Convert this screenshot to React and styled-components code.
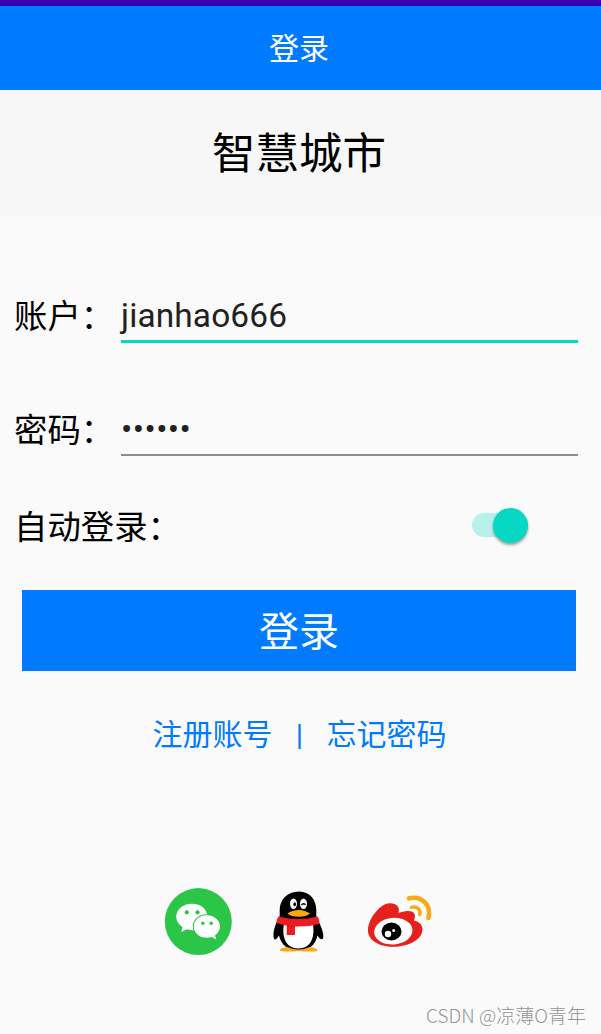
import React from 'react'
import styled, { createGlobalStyle } from 'styled-components'

const GlobalStyle = createGlobalStyle`
  body {
    margin: 0;
    background: #fafafa;
  }
  * {
    box-sizing: border-box;
  }
`

const Screen = styled.div`
  display: flex;
  flex-direction: column;
  height: 1034px;
  overflow: hidden;
  background: #fafafa;
  color: #000;
  font-family: Roboto, 'Noto Sans CJK SC', sans-serif;
`

const StatusBar = styled.div`
  height: 6px;
  background: #3700b3;
`

const TitleBar = styled.header`
  display: flex;
  align-items: center;
  justify-content: center;
  height: 84px;
  padding: 2px 3px 0 0;
  background: #007bff;
  color: #fff;
  font-size: 30px;
  line-height: 44px;
`

const Banner = styled.h1`
  display: flex;
  align-items: center;
  justify-content: center;
  height: 126px;
  margin: 0;
  padding: 4px 3px 0 0;
  background: #f7f7f7;
  font-size: 43.5px;
  font-weight: 400;
  line-height: 64px;
`

const Form = styled.div`
  display: flex;
  flex-direction: column;
  padding: 76px 23px 0 14px;
`

const Field = styled.div`
  display: flex;
  height: 51px;
  margin-bottom: 62px;
`

const Label = styled.span`
  flex: none;
  width: 107px;
  padding-top: ${p => p.$top || 0}px;
  font-size: 33.4px;
  line-height: 50px;
  white-space: nowrap;
`

const Value = styled.div`
  flex: 1;
  height: ${p => (p.$active ? 51 : 50)}px;
  margin-top: ${p => (p.$active ? 0 : 1)}px;
  border-bottom: ${p => (p.$active ? '3px solid #03dac5' : '2px solid #8d8d8d')};
  color: #212121;
  font-size: 33.4px;
  line-height: 48px;
  letter-spacing: ${p => p.$spacing || 0}px;
`

const SwitchRow = styled.div`
  display: flex;
  align-items: center;
  justify-content: space-between;
  height: 50px;
  margin-top: -18px;
  padding-right: 50px;
`

const Track = styled.div`
  display: flex;
  align-items: center;
  justify-content: flex-end;
  width: 56px;
  height: 24px;
  border-radius: 12px;
  background: #b8f1eb;
`

const Thumb = styled.div`
  flex: none;
  width: 35px;
  height: 35px;
  border-radius: 50%;
  background: #06d8c3;
  box-shadow: 0 2px 3px rgba(0, 0, 0, 0.38);
`

const LoginButton = styled.button`
  height: 81px;
  margin: 40px 25px 0 22px;
  padding: 5px 0 0;
  border: 0;
  background: #007bff;
  color: #fff;
  font-family: inherit;
  font-size: 40px;
  line-height: 76px;
`

const Links = styled.nav`
  display: flex;
  align-items: center;
  justify-content: center;
  height: 44px;
  margin-top: 42px;
  padding-right: 2px;
  color: #007bff;
  font-size: 30px;
  line-height: 44px;
`

const Divider = styled.span`
  width: 54px;
  text-align: center;
`

const Socials = styled.div`
  display: flex;
  align-items: center;
  height: 80px;
  margin-top: 124px;
  padding-left: 158px;
`

const Icon = styled.svg`
  display: block;
  flex: none;
  width: ${p => p.$width}px;
  height: 80px;
`

const Watermark = styled.footer`
  align-self: flex-end;
  margin-top: 40px;
  padding-right: 15px;
  color: #949494;
  font-family: 'Noto Sans CJK SC', sans-serif;
  font-size: 19px;
  font-weight: 300;
  line-height: 28px;
  text-shadow: 1px 1px 0 #fff;
`

const WechatIcon = () => (
  <Icon $width={102} viewBox="158 881 102 80">
    <circle cx="198.3" cy="921.6" r="33.5" fill="#2bc548" />
    <path
      d="M192 903.700C183 903.700 176.200 909.500 176.200 916.800C176.200 921 178.600 924.500 182.500 927L181.200 932L187 929.200Q191 930.500 195 930C204 929.500 207.500 923 207.500 916.500C207 909 201 903.700 192 903.700Z"
      fill="#fff"
    />
    <circle cx="186.800" cy="912.300" r="2.100" fill="#2bc548" />
    <circle cx="197.500" cy="912.300" r="2.100" fill="#2bc548" />
    <path
      d="M206.700 915.300C199.500 915.300 193.800 920.200 193.800 926.500C193.800 933 199.500 937.800 206.700 937.800Q209.500 937.800 212 937L216.200 939.500L215 935.200C218 933 220 930 220 926.500C220 920.200 214 915.300 206.700 915.300Z"
      fill="#fff"
      stroke="#2bc548"
      strokeWidth="2"
      paintOrder="stroke"
    />
    <circle cx="202.800" cy="923.300" r="1.750" fill="#2bc548" />
    <circle cx="211.200" cy="923.300" r="1.750" fill="#2bc548" />
  </Icon>
)

const QqIcon = () => (
  <Icon $width={98} viewBox="0 1 98 80">
    <path
      d="M39 11.500C27 11.500 19.700 20 19.700 30V36C17 41 13 49 13.500 56.500C13.700 60 15.500 61 19 55.500C21 65 28 70.500 39 70.500C49 70.500 55.500 65 57.500 55.500C61 61 63.400 60 63.300 56C63.200 49 58.500 42 56.300 36V30C56.300 20 50 11.500 39 11.500Z"
      fill="#000"
    />
    <path d="M24 44C21.500 57 26 68.500 38.500 68.500C51 68.500 55 57 53 44Q39 48 24 44Z" fill="#fff" />
    <path
      d="M20 70.300C20 68.200 24 67.200 28 67.200Q33 69.500 38.500 69.500Q44 69.500 49 67.200C54 67.200 57.500 68.500 57.500 70.500C57 71.600 53 71.600 48 71.600Q42 71.600 38.500 70.700Q35 71.600 29 71.600C24 71.600 20 71.500 20 70.300Z"
      fill="#fca90c"
    />
    <path d="M18.500 36.500Q39 41.500 57.500 36.500Q60 40 59 44Q48 47 35 46.500V55H26.700V45.500Q21 44.500 16.500 43Q16.200 39.500 18.500 36.500Z" fill="#ed1c24" />
    <path d="M27 46L35 46.500" stroke="#c9161d" fill="none" />
    <ellipse cx="33.500" cy="23.800" rx="3.500" ry="5.200" fill="#fff" />
    <ellipse cx="43.500" cy="23.800" rx="3.500" ry="5.200" fill="#fff" />
    <ellipse cx="34.700" cy="24.300" rx="1.300" ry="2" fill="#000" />
    <path d="M41.500 25Q43.500 22.500 45.500 24.800" fill="none" stroke="#000" strokeWidth="1.400" />
    <path d="M27.500 33.500Q32 30 39 30Q45 30 50 33.500Q46 36.800 39 36.800Q31 36.800 27.500 33.500Z" fill="#fca90c" />
  </Icon>
)

const WeiboIcon = () => (
  <Icon $width={90} viewBox="3 1 90 80">
    <path
      d="M33 23.500C26 24 14 37 13 49C12 60 24 66.800 38 66.800C53 66.800 67 60 67.500 49.500C67.500 44 63 41.500 59 40.500C61 35 60 31 53 31C49 31 46.500 32 43.500 33C45.500 26 40 22.500 33 23.500Z"
      fill="#e6201b"
    />
    <ellipse cx="38.300" cy="51.200" rx="19.200" ry="13.300" transform="rotate(-5 38.3 51.2)" fill="#fff" />
    <ellipse cx="36.500" cy="51.500" rx="10" ry="9" fill="#000" />
    <circle cx="33" cy="54" r="3.200" fill="#fff" />
    <circle cx="38.700" cy="50.500" r="1.500" fill="#fff" />
    <path d="M54 18.300C67 15.500 76.500 25 73.500 38" fill="none" stroke="#f8a916" strokeWidth="4.600" strokeLinecap="round" />
    <path d="M56.500 27.300C62.500 26 66 30 64.700 34.500" fill="none" stroke="#f8a916" strokeWidth="3.400" strokeLinecap="round" />
  </Icon>
)

export default () => (
  <Screen>
    <GlobalStyle />
    <StatusBar />
    <TitleBar>登录</TitleBar>
    <Banner>智慧城市</Banner>
    <Form>
      <Field>
        <Label>账户：</Label>
        <Value $active $spacing={0.15}>jianhao666</Value>
      </Field>
      <Field>
        <Label $top={1}>密码：</Label>
        <Value $spacing={0.45}>••••••</Value>
      </Field>
      <SwitchRow>
        <Label $top={5}>自动登录：</Label>
        <Track>
          <Thumb />
        </Track>
      </SwitchRow>
    </Form>
    <LoginButton>登录</LoginButton>
    <Links>
      <span>注册账号</span>
      <Divider>|</Divider>
      <span>忘记密码</span>
    </Links>
    <Socials>
      <WechatIcon />
      <QqIcon />
      <WeiboIcon />
    </Socials>
    <Watermark>CSDN @凉薄O青年</Watermark>
  </Screen>
)
